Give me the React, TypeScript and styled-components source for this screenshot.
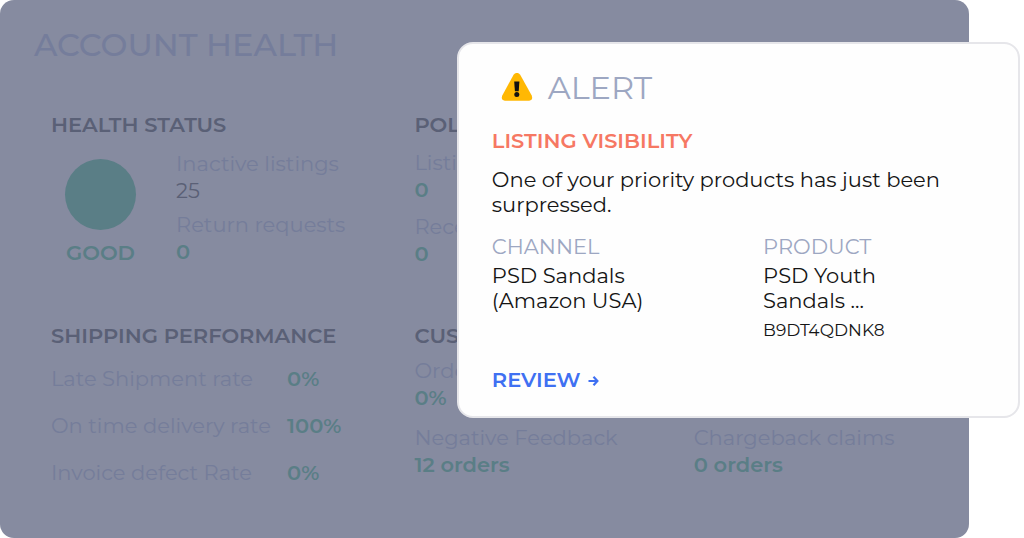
import React from "react";
import styled, { createGlobalStyle } from "styled-components";

const color = {
  panel: "#868ba0",
  panelTitle: "#757d9b",
  panelMuted: "#757d9a",
  panelStrong: "#5a6076",
  panelGreen: "#5a7e86",
  label: "#9da7c2",
  ink: "#151515",
  coral: "#f67863",
  blue: "#3f70f2",
  border: "#e6e6ea",
};

const GlobalStyle = createGlobalStyle`
  *, *::before, *::after { box-sizing: border-box; }
  body {
    margin: 0;
    background: #ffffff;
    font-family: Montserrat, Inter, "Open Sans", sans-serif;
    font-size: 21px;
  }
  h1, h2, h3, p, dl, dd { margin: 0; }
`;

const Page = styled.div`
  position: relative;
  display: flex;
  min-height: 100vh;
  padding-right: 55px;
`;

const Panel = styled.main`
  flex: 1;
  min-width: 0;
  padding: 27px 0 48px 34px;
  border-radius: 14px;
  background: ${color.panel};
`;

const PanelTitle = styled.h1`
  margin-bottom: 48px;
  font-size: 32px;
  font-weight: 500;
  line-height: 36px;
  color: ${color.panelTitle};
`;

const Sections = styled.div`
  display: grid;
  grid-template-columns: 19fr 29fr;
  row-gap: 55px;
  padding-left: 17px;
`;

const Section = styled.section`
  min-width: 0;
`;

const SectionTitle = styled.h2<{ $gap: number }>`
  margin-bottom: ${(p) => p.$gap}px;
  font-size: 21px;
  font-weight: 600;
  line-height: 27px;
  white-space: nowrap;
  color: ${color.panelStrong};
`;

const HealthBody = styled.div`
  display: flex;
  gap: 40px;
  padding-left: 14px;
`;

const Status = styled.div`
  display: flex;
  flex-direction: column;
  align-items: center;
  gap: 9px;
  padding-top: 9px;
  font-weight: 600;
  line-height: 27px;
  color: ${color.panelGreen};
`;

const StatusDot = styled.span`
  width: 71px;
  height: 71px;
  border-radius: 50%;
  background: ${color.panelGreen};
`;

const Metrics = styled.dl<{ $columns?: number; $gap?: number }>`
  display: grid;
  align-content: start;
  grid-template-columns: repeat(${(p) => p.$columns ?? 1}, 1fr);
  gap: ${(p) => p.$gap ?? 7}px 4px;
  line-height: 27px;
`;

const MetricItem = styled.div<{ $wide?: boolean }>`
  grid-column: ${(p) => (p.$wide ? "1 / -1" : "auto")};
  white-space: nowrap;
`;

const MetricLabel = styled.dt`
  color: ${color.panelMuted};
`;

const MetricValue = styled.dd<{ $plain?: boolean }>`
  font-weight: ${(p) => (p.$plain ? 400 : 600)};
  color: ${(p) => (p.$plain ? color.panelStrong : color.panelGreen)};
`;

const RateTable = styled.table`
  border-collapse: collapse;
  line-height: 27px;

  tr + tr > * {
    padding-top: 20px;
  }
`;

const RateLabel = styled.th`
  min-width: 236px;
  padding: 0;
  font-weight: 400;
  text-align: left;
  white-space: nowrap;
  color: ${color.panelMuted};
`;

const RateValue = styled.td`
  padding: 0;
  font-weight: 600;
  color: ${color.panelGreen};
`;

const Alert = styled.aside`
  position: absolute;
  top: 42px;
  right: 4px;
  width: 55%;
  padding: 26px 33px 23px;
  border: 2px solid ${color.border};
  border-radius: 16px;
  background: #fefefe;
  color: ${color.ink};
`;

const AlertHeader = styled.header`
  display: flex;
  align-items: center;
  gap: 15px;
  margin-bottom: 21px;
  padding-left: 9px;
`;

const AlertTitle = styled.h2`
  font-size: 32px;
  font-weight: 400;
  line-height: 36px;
  color: ${color.label};
`;

const AlertKind = styled.h3`
  margin-bottom: 13px;
  font-size: 21px;
  font-weight: 600;
  line-height: 27px;
  color: ${color.coral};
`;

const AlertText = styled.p`
  margin-bottom: 17px;
  line-height: 25px;
`;

const Details = styled.dl`
  display: grid;
  grid-template-columns: 11fr 9fr;
  margin-bottom: 24px;
`;

const DetailLabel = styled.dt`
  margin-bottom: 3px;
  line-height: 26px;
  color: ${color.label};
`;

const DetailValue = styled.dd`
  max-width: 160px;
  line-height: 25px;
`;

const DetailCode = styled.dd`
  padding-top: 5px;
  font-size: 17px;
  line-height: 24px;
`;

const ReviewLink = styled.a`
  display: inline-flex;
  align-items: center;
  gap: 7px;
  font-weight: 600;
  line-height: 27px;
  text-decoration: none;
  color: ${color.blue};
`;

const WarningIcon = () => (
  <svg width="32" height="30" viewBox="0 0 32 30" aria-hidden="true">
    <path
      d="M12.6 1.8Q16-2 19.2 1.8L30.7 22.4Q32.4 27.2 28.2 27.7H3.8Q-.4 27.2 1.3 22.4Z"
      fill="#ffb803"
    />
    <path d="M13.2 8.6H18.4L17.7 18.2H13.9Z" fill="#111" />
    <circle cx="15.8" cy="21.6" r="2.5" fill="#111" />
  </svg>
);

const ArrowIcon = () => (
  <svg width="11" height="12" viewBox="0 0 11 12" aria-hidden="true">
    <path
      d="M.5 7H9.5M5.5 2.7L9.4 7L5.5 11.3"
      fill="none"
      stroke="currentColor"
      strokeWidth="2.2"
    />
  </svg>
);

type MetricProps = { label: string; value: string; plain?: boolean; wide?: boolean };

const Metric = ({ label, value, plain, wide }: MetricProps) => (
  <MetricItem $wide={wide}>
    <MetricLabel>{label}</MetricLabel>
    <MetricValue $plain={plain}>{value}</MetricValue>
  </MetricItem>
);

const rates = [
  ["Late Shipment rate", "0%"],
  ["On time delivery rate", "100%"],
  ["Invoice defect Rate", "0%"],
];

export default function App() {
  return (
    <>
      <GlobalStyle />
      <Page>
        <Panel>
          <PanelTitle>ACCOUNT HEALTH</PanelTitle>
          <Sections>
            <Section>
              <SectionTitle $gap={12}>HEALTH STATUS</SectionTitle>
              <HealthBody>
                <Status>
                  <StatusDot />
                  GOOD
                </Status>
                <Metrics>
                  <Metric label="Inactive listings" value="25" plain />
                  <Metric label="Return requests" value="0" />
                </Metrics>
              </HealthBody>
            </Section>

            <Section>
              <SectionTitle $gap={11}>POLICY</SectionTitle>
              <Metrics $gap={10}>
                <Metric label="Listing" value="0" />
                <Metric label="Recent" value="0" />
              </Metrics>
            </Section>

            <Section>
              <SectionTitle $gap={16}>SHIPPING PERFORMANCE</SectionTitle>
              <RateTable>
                <tbody>
                  {rates.map(([label, value]) => (
                    <tr key={label}>
                      <RateLabel scope="row">{label}</RateLabel>
                      <RateValue>{value}</RateValue>
                    </tr>
                  ))}
                </tbody>
              </RateTable>
            </Section>

            <Section>
              <SectionTitle $gap={8}>CUSTOMER</SectionTitle>
              <Metrics $columns={2} $gap={13}>
                <Metric label="Orders" value="0%" wide />
                <Metric label="Negative Feedback" value="12 orders" />
                <Metric label="Chargeback claims" value="0 orders" />
              </Metrics>
            </Section>
          </Sections>
        </Panel>

        <Alert role="alert">
          <AlertHeader>
            <WarningIcon />
            <AlertTitle>ALERT</AlertTitle>
          </AlertHeader>
          <AlertKind>LISTING VISIBILITY</AlertKind>
          <AlertText>One of your priority products has just been surpressed.</AlertText>
          <Details>
            <div>
              <DetailLabel>CHANNEL</DetailLabel>
              <DetailValue>PSD Sandals (Amazon USA)</DetailValue>
            </div>
            <div>
              <DetailLabel>PRODUCT</DetailLabel>
              <DetailValue>PSD Youth Sandals ...</DetailValue>
              <DetailCode>B9DT4QDNK8</DetailCode>
            </div>
          </Details>
          <ReviewLink href="#review">
            REVIEW <ArrowIcon />
          </ReviewLink>
        </Alert>
      </Page>
    </>
  );
}
